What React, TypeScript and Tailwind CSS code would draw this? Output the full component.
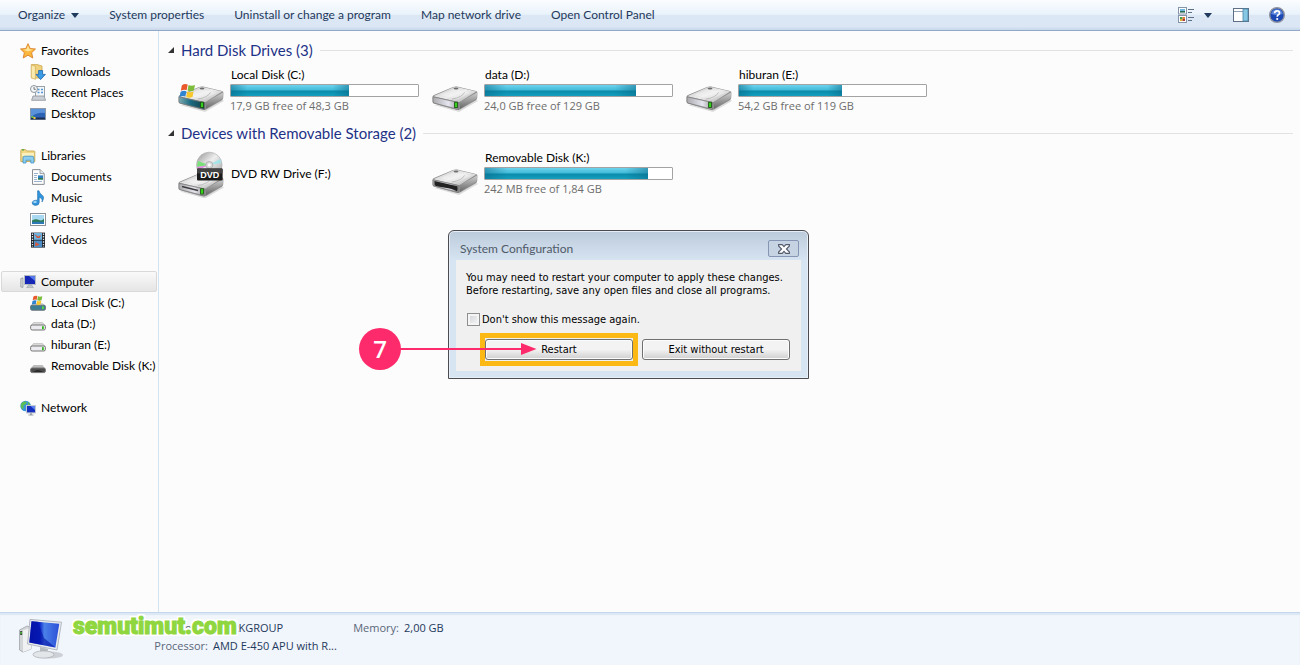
import type { ReactNode } from "react";

function Flag() {
  return (
    <g>
      <path d="M1.5 2.2 Q4.5 .2 7.3 1.6 L6.2 7.2 Q3.6 6 .4 7.8Z" fill="#e8582a" />
      <path d="M8.2 2 Q11 3.4 14.6 2 L13.4 7.6 Q10 9 7.1 7.6Z" fill="#7dbb3a" />
      <path d="M.2 8.8 Q3.4 7 6 8.2 L4.9 13.6 Q2.4 12.4 -.9 14Z" fill="#2f83d0" />
      <path d="M6.9 8.5 Q9.8 10 13.2 8.6 L12.1 14 Q8.8 15.4 5.8 14Z" fill="#f8c72c" />
    </g>
  );
}

function DriveBody({ kind }: { kind: "hdd" | "system" | "removable" | "dvd" }) {
  const front = kind === "system" ? "url(#frontTeal)" : "url(#frontGrey)";
  return (
    <g>
      <path d="M3 38 L28 45 L47 34 L44 32 Z" fill="#000" opacity=".13" />
      <path d="M1.6 29.5 Q1.6 28.6 3 28 L22 20 Q24 19.2 26 19.6 L45 24 Q46.6 24.6 46.4 26 L46.2 31 Q46 32.4 44.8 33.2 L29 42.6 Q27.6 43.3 26 42.9 L2.8 36.6 Q1.6 36.2 1.6 34.8Z" fill="#8e8e8e" />
      <path d="M2.2 29.2 L22 20.4 Q24 19.6 26 20 L45.2 24.6 L29.4 34.4 Q28 35.2 26.4 34.8Z" fill="url(#driveTop)" />
      <path d="M9 28 L23.4 22 L40 25.8 L27 32Z" fill="#fff" opacity=".3" />
      <path d="M21 32 Q31 30.5 33.5 25.4" fill="none" stroke="#b4b4b4" strokeWidth=".8" />
      <path d="M29 35 L46 25.4 L45.8 31.2 L29 41.8Z" fill="url(#driveSide)" />
      <path d="M2 29.8 L27.6 35.6 L27.6 42.4 L2.8 36 L2 34.8Z" fill={front} stroke="#7a7a7a" strokeWidth=".7" />
      <ellipse cx="25" cy="21.6" rx="2.4" ry="1" fill="#6d6d6d" />
      {kind === "removable" ? (
        <path d="M3.4 31 L26.4 36.2 Q27 38.6 26.2 41.4 Q22 38.6 13 37.4 Q6 36.6 3.6 35.2Z" fill="#222" />
      ) : (
        <rect x="23.6" y="35.2" width="2.8" height="5.4" fill="#35d01c" stroke="#1b4d12" strokeWidth=".8" />
      )}
      {kind === "dvd" && <path d="M5 33 L21 37" stroke="#3c3c3c" strokeWidth="1.3" />}
    </g>
  );
}

function DriveIcon({ kind }: { kind: "hdd" | "system" | "removable" | "dvd" }) {
  return (
    <svg viewBox="0 0 48 48" className="size-12 shrink-0" aria-hidden="true">
      <defs>
        <linearGradient id="driveTop" x1="0" y1="0" x2="1" y2="1">
          <stop offset="0" stopColor="#c4c4c4" />
          <stop offset=".5" stopColor="#ededed" />
          <stop offset="1" stopColor="#adadad" />
        </linearGradient>
        <linearGradient id="driveSide" x1="0" y1="0" x2="0" y2="1">
          <stop offset="0" stopColor="#cfcfcf" />
          <stop offset="1" stopColor="#666" />
        </linearGradient>
        <linearGradient id="frontGrey" x1="0" y1="0" x2="1" y2="0">
          <stop offset="0" stopColor="#a9a9ad" />
          <stop offset=".6" stopColor="#e6e6f0" />
          <stop offset="1" stopColor="#999" />
        </linearGradient>
        <linearGradient id="frontTeal" x1="0" y1="0" x2="1" y2="0">
          <stop offset="0" stopColor="#7ba9b3" />
          <stop offset=".45" stopColor="#1c6b80" />
          <stop offset="1" stopColor="#16404c" />
        </linearGradient>
        <linearGradient id="disc" x1="0" y1="0" x2="1" y2="1">
          <stop offset="0" stopColor="#8f8f8f" />
          <stop offset=".45" stopColor="#efefef" />
          <stop offset="1" stopColor="#9c9c9c" />
        </linearGradient>
      </defs>
      {kind === "dvd" ? (
        <>
          <g transform="translate(0 3.5)">
            <DriveBody kind="dvd" />
          </g>
          <circle cx="32.3" cy="15" r="12.8" fill="url(#disc)" stroke="#aaa" strokeWidth=".6" />
          <path d="M32 15 L21 11 L20 17Z" fill="#7be07a" />
          <path d="M32 15 L20 17 L21 20Z" fill="#e08be0" />
          <path d="M32 15 L43 9 L44.6 13Z" fill="#9ae6ee" opacity=".8" />
          <circle cx="32.3" cy="15" r="3.6" fill="#d8d8d8" stroke="#999" strokeWidth=".6" />
          <circle cx="32.3" cy="15" r="1.4" fill="#fff" />
          <rect x="20" y="18.6" width="25.6" height="12" rx="1" fill="#1c1c1c" />
          <rect x="20" y="18.6" width="25.6" height="5" rx="1" fill="#444" />
          <text x="32.8" y="28.4" textAnchor="middle" fontSize="9" fontWeight="600" fill="#fff" fontFamily="Liberation Sans, sans-serif">
            DVD
          </text>
        </>
      ) : (
        <DriveBody kind={kind} />
      )}
      {kind === "system" && (
        <g transform="translate(3.4 16)">
          <Flag />
        </g>
      )}
    </svg>
  );
}

function Icon({ children }: { children: ReactNode }) {
  return (
    <svg viewBox="0 0 16 16" className="size-4 shrink-0" aria-hidden="true">
      {children}
    </svg>
  );
}

const smallDrive = (
  <Icon>
    <path d="M3.5 6.5 H12.5 L15.5 10 H.5Z" fill="#d9d9d9" stroke="#aaa" strokeWidth=".5" />
    <rect x=".6" y="9" width="14.8" height="5" rx="1.6" fill="#ececf0" stroke="#777" />
    <rect x="12" y="10.2" width="1.8" height="3" fill="#32b81e" />
  </Icon>
);

const icons = {
  star: (
    <Icon>
      <path d="M8 .7 L10.2 5.5 L15.5 6 L11.6 9.7 L12.8 15 L8 12.2 L3.2 15 L4.4 9.7 L.5 6 L5.8 5.5Z" fill="#fbb63c" stroke="#d9822b" strokeWidth=".9" strokeLinejoin="round" />
      <path d="M8 2.6 L9.5 6.3 L13 6.8 L8 8.6 L3.2 6.8 L6.5 6.3Z" fill="#ffe49a" />
    </Icon>
  ),
  downloads: (
    <Icon>
      <path d="M1.5 .6 H7 L12 2 V14 H1.5Z" fill="#f0d27c" stroke="#c9a54a" strokeWidth=".8" />
      <path d="M1.2 .8 L5.4 2.4 V15.4 L1.2 13.6Z" fill="#faeab0" stroke="#cfae58" strokeWidth=".7" />
      <path d="M8.6 6.5 H12.6 V10.4 H15.4 L10.6 15.6 L6 10.4 H8.6Z" fill="#3a9be6" stroke="#1c64ad" strokeWidth=".8" />
    </Icon>
  ),
  recent: (
    <Icon>
      <rect x="5.5" y="1.5" width="9" height="10" fill="#f4f7fa" stroke="#98a1aa" />
      <path d="M7.5 4.5 h2 M11 4.5 h2 M7.5 7.5 h2 M11 7.5 h2" stroke="#4f97d6" strokeWidth="1.6" />
      <path d="M3 11 H14 L15.6 15.3 H1.6Z" fill="#c9cfd5" stroke="#8b939b" strokeWidth=".8" />
      <circle cx="4" cy="4" r="3.5" fill="#f4f6f8" stroke="#8e979f" />
      <path d="M4 2 V4.3 H5.8" fill="none" stroke="#555" strokeWidth=".8" />
    </Icon>
  ),
  desktop: (
    <Icon>
      <rect x=".5" y="2.5" width="15" height="11" fill="#2c63b4" stroke="#8b98a8" />
      <path d="M1 3 H15 V7 Q7 6 1 11Z" fill="#5b93da" />
      <rect x="1" y="11.5" width="14" height="2" fill="#1b2e52" />
      <path d="M1.5 10 h2 v2 h-2z" fill="#6fc04a" />
      <path d="M3.5 11 h2 v2 h-2z" fill="#f4cd3c" />
    </Icon>
  ),
  libraries: (
    <Icon>
      <path d="M.8 13.5 V2.4 Q.8 1.6 1.6 1.6 H5.6 L6.6 3 H14 Q14.8 3 14.8 3.8 V13.5Z" fill="#f1d887" stroke="#cba84e" strokeWidth=".9" />
      <path d="M2 5 H14 V8 H2Z" fill="#fbf0bd" />
      <path d="M2 1.8 h2" stroke="#4ba63c" strokeWidth="1.2" />
      <path d="M3 15 V10 Q3 8.2 4.8 8.2 H12 Q13.8 8.2 13.8 10 V15 H10.8 V12.2 H6 V15Z" fill="#8ccdf0" stroke="#3f93c8" strokeWidth=".8" />
    </Icon>
  ),
  documents: (
    <Icon>
      <path d="M2.5 .6 H10 L14.2 4.6 V15.4 H2.5Z" fill="#fdfdfd" stroke="#8a8f94" />
      <path d="M10 .6 V4.6 H14.2" fill="#e3e6e8" stroke="#8a8f94" strokeWidth=".8" />
      <path d="M4 4.5 h4 M4 6.5 h3 M4 8.5 h3 M4 10.5 h3 M4 12.5 h8" stroke="#8fa9c8" strokeWidth=".9" />
      <rect x="8" y="6.4" width="5" height="4" fill="#2f7fc0" />
      <path d="M8 9 H13 V10.6 H8Z" fill="#2d7d54" />
    </Icon>
  ),
  music: (
    <Icon>
      <path d="M7.6 .8 H9 Q9.5 3.8 12.2 5.2 Q15 7.2 12 12 Q13 8.4 9.2 7.2 V12.4 Q9.2 15.4 5.2 15.4 Q2 15 2.2 12.6 Q2.8 10 7.6 10.2Z" fill="#3295dd" stroke="#1f6cab" strokeWidth=".6" />
      <ellipse cx="5" cy="12" rx="1.8" ry="1.1" fill="#a6d8f7" />
    </Icon>
  ),
  pictures: (
    <Icon>
      <rect x=".5" y="2.5" width="15" height="12" fill="#fff" stroke="#8c9299" />
      <rect x="2" y="4" width="12" height="9" fill="#a9d9f2" />
      <path d="M2 9.5 Q6 7.5 9 9 T14 7.4 V11 H2Z" fill="#2d7d54" />
      <rect x="2" y="10.8" width="12" height="2.2" fill="#2d78b6" />
    </Icon>
  ),
  videos: (
    <Icon>
      <rect x="1" y=".6" width="14" height="15" fill="#20252c" />
      <rect x="4" y="1" width="8" height="6.8" fill="#6fb2de" />
      <rect x="4" y="8.6" width="8" height="6.6" fill="#4c8fc8" />
      <path d="M4.2 2 L8 4.4 L11 3 L9.6 6 H7Z M5.4 10 L8 11.4 L9.6 12.6 L8 13.6 L5 14Z" fill="#d2593c" />
      <path d="M2.5 1.5 V15 M13.5 1.5 V15" stroke="#dfe6ea" strokeWidth="1.3" strokeDasharray="1.4 1.2" />
    </Icon>
  ),
  computer: (
    <Icon>
      <path d="M.8 4.6 L3 3.8 V13.4 L.8 13Z" fill="#d5d8da" stroke="#8b9094" strokeWidth=".7" />
      <rect x="4.5" y="1.5" width="11" height="9" fill="#1527b4" stroke="#b6bcc4" />
      <path d="M9 2 H15 V7Z" fill="#5579ea" />
      <path d="M8.5 11 H11.5 L13.4 13.6 H6.6Z" fill="#c4c9ce" stroke="#8c9298" strokeWidth=".5" />
    </Icon>
  ),
  system: (
    <Icon>
      <path d="M3.5 8 H12.5 L15.5 11 H.5Z" fill="#cfd3d6" />
      <rect x=".6" y="10.2" width="14.8" height="5" rx="1.4" fill="#3d7d93" stroke="#68747a" />
      <rect x="12" y="11.4" width="1.8" height="2.6" fill="#5ade3c" />
      <g transform="translate(2.4 0) scale(.68)">
        <Flag />
      </g>
    </Icon>
  ),
  drive: smallDrive,
  removable: (
    <Icon>
      <path d="M3.5 7 H12.5 L15.5 11 H.5Z" fill="#bdbdbd" />
      <rect x=".6" y="10" width="14.8" height="4.6" rx="1.6" fill="#4c4c4c" stroke="#777" />
      <path d="M3 13.8 Q8 10.6 13 13.8Z" fill="#1d1d1d" />
    </Icon>
  ),
  network: (
    <Icon>
      <circle cx="5.6" cy="6" r="5.3" fill="#3b95d6" />
      <path d="M2 2.4 Q5 .6 7 2 Q6 5 3.4 5.4 Q4 9 2.2 9.2 Q-.4 6 2 2.4Z M8 1.6 L10.6 5 L8 5Z" fill="#5cbf53" />
      <rect x="6.5" y="5.5" width="9" height="7.4" fill="#1730bd" stroke="#c3c9d1" />
      <path d="M10.5 6 H15 V10Z" fill="#5c83ee" />
      <path d="M10 13.2 h2 v1.2 h1.6 v1 h-5.2 v-1 H10z" fill="#9aa1a8" />
    </Icon>
  ),
};

type Node = { label: string; icon: keyof typeof icons };
const tree: { root: Node; items: Node[] }[] = [
  {
    root: { label: "Favorites", icon: "star" },
    items: [
      { label: "Downloads", icon: "downloads" },
      { label: "Recent Places", icon: "recent" },
      { label: "Desktop", icon: "desktop" },
    ],
  },
  {
    root: { label: "Libraries", icon: "libraries" },
    items: [
      { label: "Documents", icon: "documents" },
      { label: "Music", icon: "music" },
      { label: "Pictures", icon: "pictures" },
      { label: "Videos", icon: "videos" },
    ],
  },
  {
    root: { label: "Computer", icon: "computer" },
    items: [
      { label: "Local Disk (C:)", icon: "system" },
      { label: "data (D:)", icon: "drive" },
      { label: "hiburan (E:)", icon: "drive" },
      { label: "Removable Disk (K:)", icon: "removable" },
    ],
  },
  { root: { label: "Network", icon: "network" }, items: [] },
];

function Sidebar() {
  return (
    <nav className="flex w-[159px] shrink-0 flex-col gap-[21px] border-r border-[#d3e3f2] pt-[9px]">
      {tree.map(({ root, items }) => (
        <ul key={root.label}>
          <li>
            <a
              href="#"
              className={
                root.label === "Computer"
                  ? "ml-px mr-px flex h-[21px] items-center gap-[5px] rounded-[2px] border border-[#d9d9d9] bg-linear-to-b from-[#fafafa] to-[#e5e5e5] pl-[18px]"
                  : "flex h-[21px] items-center gap-[5px] pl-5"
              }
            >
              {icons[root.icon]}
              {root.label}
            </a>
          </li>
          {items.map((item) => (
            <li key={item.label}>
              <a href="#" className="flex h-[21px] items-center gap-[5px] pl-[30px] whitespace-nowrap">
                {icons[item.icon]}
                {item.label}
              </a>
            </li>
          ))}
        </ul>
      ))}
    </nav>
  );
}

type Drive = { name: string; kind: "hdd" | "system" | "removable" | "dvd"; used?: number; free?: string };

function DriveTile({ name, kind, used, free }: Drive) {
  return (
    <div className="flex h-12 w-[254px] items-center gap-[5px]">
      <DriveIcon kind={kind} />
      <div className="flex w-[189px] flex-col">
        <span className="pl-px leading-4">{name}</span>
        {free && (
          <>
            <div className="mt-px h-[13px] rounded-[1px] border border-[#a3a3a3] bg-white">
              <div
                className="h-full bg-[linear-gradient(90deg,#0a6a8a88_0%,#ffffff00_14%,#ffffff00_86%,#0a6a8a88_100%),linear-gradient(180deg,#6dd3ec_0%,#3fb9d8_48%,#0a8aa9_52%,#159fbe_100%)]"
                style={{ width: `${used}%` }}
              />
            </div>
            <span className="font-['Open_Sans',sans-serif] text-[11px] leading-[18px] text-[#6d6d6d]">{free}</span>
          </>
        )}
      </div>
    </div>
  );
}

function Group({ title, drives }: { title: string; drives: Drive[] }) {
  return (
    <section>
      <h2 className="flex h-5 items-center pl-[9px] pr-[7px] text-[15px] text-[#1e3287]">
        <svg viewBox="0 0 6 6" className="mr-[7px] size-[6px] shrink-0" aria-hidden="true">
          <path d="M6 0 V6 H0Z" fill="#333" />
        </svg>
        {title}
        <span className="ml-[7px] h-px flex-1 bg-[#e2e2e2]" />
      </h2>
      <div className="mt-[7px] flex flex-wrap pl-[18px]">
        {drives.map((d) => (
          <DriveTile key={d.name} {...d} />
        ))}
      </div>
    </section>
  );
}

function Toolbar() {
  return (
    <header className="flex h-[31px] shrink-0 items-center border-b border-[#93a8c6] bg-[linear-gradient(180deg,#fbfdff_0%,#e9f2fb_48%,#dce7f5_50%,#dbe7f5_88%,#c8d8ea_100%)] pl-[18px] pr-[15px] text-[#1e395b]">
      <div className="flex flex-1 items-center gap-[30px]">
        <button type="button" className="flex items-center gap-[6px]">
          Organize
          <svg viewBox="0 0 8 5" className="h-[5px] w-2" aria-hidden="true">
            <path d="M0 0 H8 L4 5Z" fill="#1e395b" />
          </svg>
        </button>
        <button type="button">System properties</button>
        <button type="button">Uninstall or change a program</button>
        <button type="button">Map network drive</button>
        <button type="button">Open Control Panel</button>
      </div>
      <button type="button" aria-label="Change your view" className="flex items-center gap-[9px]">
        <svg viewBox="0 0 17 16" className="h-4 w-[17px]" aria-hidden="true">
          <rect x=".5" y=".5" width="8" height="6.5" fill="#fff" stroke="#8694a8" />
          <rect x="2" y="2" width="5" height="2" fill="#6eb5e0" />
          <rect x="2" y="4" width="5" height="1.6" fill="#286b50" />
          <rect x=".5" y="8.5" width="8" height="7" fill="#fff" stroke="#8694a8" />
          <rect x="2" y="10" width="2.5" height="2" fill="#43a047" />
          <rect x="4.5" y="10" width="2.5" height="2" fill="#e07c35" />
          <rect x="2" y="12" width="2.5" height="2" fill="#d9b334" />
          <rect x="4.5" y="12" width="2.5" height="2" fill="#b03a34" />
          <path d="M10 2.5 H16 M10 5.5 H14 M10 10.5 H16 M10 13.5 H14" stroke="#5f6f86" />
        </svg>
        <svg viewBox="0 0 8 5" className="h-[5px] w-2" aria-hidden="true">
          <path d="M0 0 H8 L4 5Z" fill="#1e395b" />
        </svg>
      </button>
      <button type="button" aria-label="Show the preview pane" className="ml-[21px]">
        <svg viewBox="0 0 16 14" className="h-[14px] w-4" aria-hidden="true">
          <rect x=".5" y=".5" width="15" height="13" fill="#fff" stroke="#5f7086" />
          <path d="M1 3.5 H10" stroke="#8fa0b5" />
          <rect x="10" y="1" width="5" height="12" fill="#86c8e4" stroke="#4b86a6" strokeWidth=".8" />
        </svg>
      </button>
      <button type="button" aria-label="Get help" className="ml-5">
        <svg viewBox="0 0 16 16" className="size-4" aria-hidden="true">
          <circle cx="8" cy="8" r="7.3" fill="#1c48b4" stroke="#8d929e" strokeWidth="1.4" />
          <path d="M2.2 7 A5.9 5.9 0 0 1 13.8 7 Q8 9 2.2 7Z" fill="#5b86dc" />
          <path d="M5.6 6.2 Q5.8 3.8 8.1 3.8 Q10.5 3.8 10.5 5.9 Q10.5 7.1 9.3 7.8 Q8.2 8.5 8.2 9.8" fill="none" stroke="#fff" strokeWidth="1.7" />
          <circle cx="8.2" cy="12" r="1.1" fill="#fff" />
        </svg>
      </button>
    </header>
  );
}

const dialogButton =
  "h-[21px] w-[148px] rounded-[3px] border border-[#707070] bg-linear-to-b from-[#f3f3f3] from-50% to-[#cfcfcf] leading-[19px] shadow-[inset_0_0_0_1px_#fcfcfc]";

function Dialog() {
  return (
    <div
      role="dialog"
      aria-labelledby="dialog-title"
      className="absolute left-[448px] top-[230px] w-[361px] rounded-t-[6px] border border-[#4b4b50] bg-linear-to-b from-[#bccbdb] to-[#d7e4f2] to-[30px] px-[7px] pb-[7px] shadow-[inset_0_0_0_1px_#e6eff8]"
    >
      <div className="flex h-[29px] items-center justify-between pl-1 pr-[2px] pt-[6px]">
        <h2 id="dialog-title" className="text-[#4f5a68]">
          System Configuration
        </h2>
        <button type="button" aria-label="Close" className="flex h-[17px] w-[31px] items-center justify-center rounded-[2px] border border-[#8595b3] bg-[#c5d3e3]">
          <svg viewBox="0 0 12 10" className="h-[10px] w-3" aria-hidden="true">
            <path d="M.6 .6 H4.2 L6 2.6 L7.8 .6 H11.4 V2 L8.4 5 L11.4 8 V9.4 H7.8 L6 7.4 L4.2 9.4 H.6 V8 L3.6 5 L.6 2Z" fill="#fff" stroke="#525a6b" strokeWidth="1.1" />
          </svg>
        </button>
      </div>
      <div className="bg-[#f0f0f0] pl-[10px] pt-[11px] pb-[5px] font-['DejaVu_Sans_Condensed','DejaVu_Sans',sans-serif] text-[11px] leading-[13px]">
        <p className="whitespace-nowrap">
          You may need to restart your computer to apply these changes.
          <br />
          Before restarting, save any open files and close all programs.
        </p>
        <label className="mt-4 flex h-[13px] items-center gap-[2px]">
          <input type="checkbox" className="ml-px size-[13px] appearance-none border border-[#8e8f8f] bg-linear-to-br from-[#cfd2d6] to-[#f8f8f8] shadow-[inset_0_0_0_2px_#f4f4f4]" />
          Don't show this message again.
        </label>
        <div className="mt-[7px] ml-[14px] flex items-center gap-1">
          <div className="border-[5px] border-[#fcb814] py-px">
            <button type="button" className={dialogButton}>
              Restart
            </button>
          </div>
          <button type="button" className={dialogButton}>
            Exit without restart
          </button>
        </div>
      </div>
    </div>
  );
}

function StepMarker() {
  return (
    <div className="absolute left-[359px] top-[328px] flex items-center">
      <span className="flex size-[42px] items-center justify-center rounded-full bg-[#fe2b6c] font-['Open_Sans',sans-serif] text-[24px] font-semibold text-white">
        7
      </span>
      <svg viewBox="0 0 137 12" className="-ml-px h-3 w-[137px]" aria-hidden="true">
        <path d="M0 6 H122" stroke="#fe2b6c" strokeWidth="2" />
        <path d="M121 0 L136.5 6 L121 12Z" fill="#fe2b6c" />
      </svg>
    </div>
  );
}

function DetailsPane() {
  return (
    <footer className="relative flex h-[53px] shrink-0 border-t border-[#c4d7ea] bg-[#f1f5fc] pl-[18px] font-['Open_Sans',sans-serif] text-[11px] shadow-[inset_0_2px_1px_#dce8f5]">
      <svg viewBox="0 0 46 42" className="mt-[5px] h-[42px] w-[46px] shrink-0" aria-hidden="true">
        <defs>
          <linearGradient id="screen" x1="0" y1="0" x2="1" y2="0">
            <stop offset="0" stopColor="#0614b0" />
            <stop offset=".35" stopColor="#0a26c8" />
            <stop offset=".5" stopColor="#4b80e8" />
            <stop offset="1" stopColor="#2a50d8" />
          </linearGradient>
        </defs>
        <ellipse cx="31" cy="37" rx="14" ry="3.6" fill="#000" opacity=".15" />
        <path d="M1.5 12 L9 8 L13 9.5 V31 L5 34 L1.5 32Z" fill="#d3d6d8" stroke="#9fa4a8" strokeWidth=".8" />
        <path d="M5 12.6 L13 9.5 V31 L5 34Z" fill="#f0f1f2" />
        <path d="M2.2 13 h2 v4 h-2z" fill="#3a4a3a" />
        <path d="M2.6 14 h1.2 v1.6 h-1.2z" fill="#48e02c" />
        <path d="M22 29 L30 31 L29 37 H22Z" fill="#b7bcc1" />
        <ellipse cx="25.5" cy="36.5" rx="10.5" ry="3.6" fill="#e3e6e9" stroke="#a7acb2" strokeWidth=".7" />
        <path d="M12 1.4 L43.5 4.2 L39 32 L9.5 26Z" fill="#e9ecef" stroke="#a4aab2" strokeWidth=".8" />
        <path d="M13.5 3.2 L41.3 5.8 L37.4 29.5 L11.3 24.4Z" fill="url(#screen)" />
        <path d="M13.5 3.2 L20 3.8 L26 20 L37.4 29.5 L11.3 24.4 Z" fill="#0410a4" opacity=".6" />
      </svg>
      <dl className="ml-[78px] mt-[6px] grid h-9 grid-cols-[66px_137px_54px_auto] items-center text-[#1e395b]">
        <dt className="justify-self-end text-[#5a6779]">Workgroup:</dt>
        <dd className="pl-[5px]">WORKGROUP</dd>
        <dt className="justify-self-end text-[#5a6779]">Memory:</dt>
        <dd className="pl-[5px]">2,00 GB</dd>
        <dt className="justify-self-end text-[#5a6779]">Processor:</dt>
        <dd className="whitespace-nowrap pl-[5px]">AMD E-450 APU with R...</dd>
      </dl>
      <span className="absolute left-[73px] top-[-2px] font-['Roboto',sans-serif] text-[23px] leading-8 font-black text-[#8fd63f] [text-shadow:2px_0_#fff,-2px_0_#fff,0_2px_#fff,0_-2px_#fff,2px_2px_#fff,-2px_-2px_#fff,2px_-2px_#fff,-2px_2px_#fff] [-webkit-text-stroke:1px_#8fd63f]">
        semutimut.com
      </span>
    </footer>
  );
}

export default function App() {
  return (
    <div className="relative flex min-h-screen flex-col bg-[#fcfcfc] font-['Lato','Open_Sans',sans-serif] text-[12px] leading-4 text-black">
      <Toolbar />
      <div className="flex flex-1">
        <Sidebar />
        <main className="flex min-w-0 flex-1 flex-col gap-2 pt-[9px]">
          <Group
            title="Hard Disk Drives (3)"
            drives={[
              { name: "Local Disk (C:)", kind: "system", used: 63, free: "17,9 GB free of 48,3 GB" },
              { name: "data (D:)", kind: "hdd", used: 81, free: "24,0 GB free of 129 GB" },
              { name: "hiburan (E:)", kind: "hdd", used: 55, free: "54,2 GB free of 119 GB" },
            ]}
          />
          <Group
            title="Devices with Removable Storage (2)"
            drives={[
              { name: "DVD RW Drive (F:)", kind: "dvd" },
              { name: "Removable Disk (K:)", kind: "removable", used: 87, free: "242 MB free of 1,84 GB" },
            ]}
          />
        </main>
      </div>
      <DetailsPane />
      <Dialog />
      <StepMarker />
    </div>
  );
}
